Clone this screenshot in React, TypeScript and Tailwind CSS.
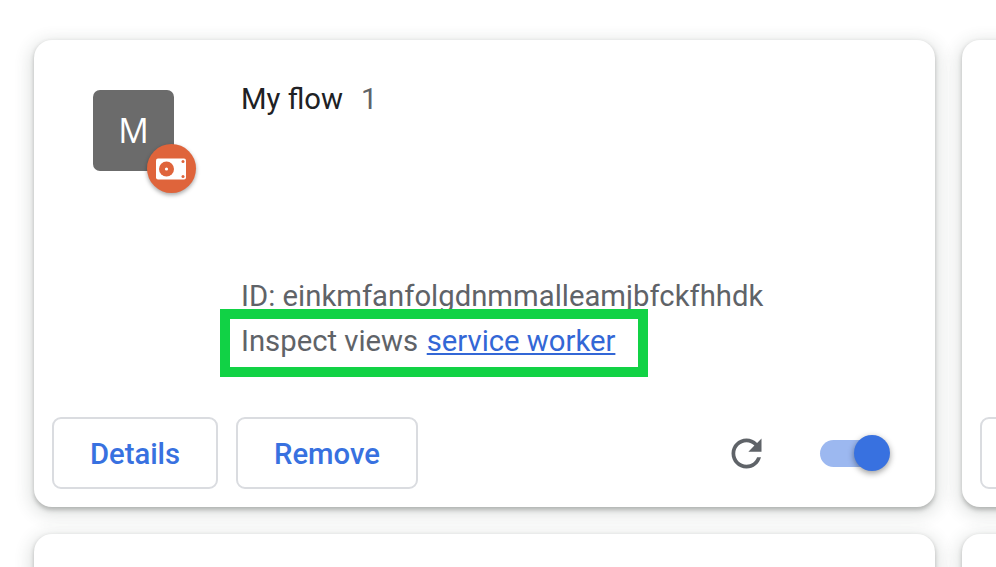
import type { ReactNode } from "react";

function Card({ children }: { children?: ReactNode }) {
  return (
    <section className="flex h-[467px] w-[901px] flex-col rounded-[18px] bg-white shadow-[0_2.25px_4.5px_rgba(60,64,60,0.3),0_4.5px_16px_4.5px_rgba(60,70,67,0.14)]">
      {children}
    </section>
  );
}

function ActionButton({ label, className }: { label?: string; className: string }) {
  return (
    <button
      className={`h-[72px] shrink-0 rounded-[9px] border-2 border-[#dadce0] pt-[3px] text-[29.25px] font-medium text-[#3871e0] ${className}`}
    >
      {label}
    </button>
  );
}

function UnpackedBadge() {
  return (
    <span className="absolute top-[54px] left-[54px] flex size-[49px] items-center justify-center rounded-full bg-[#df643b] shadow-[0_2px_4px_rgba(0,0,0,0.35)]">
      <svg className="-ml-px" width="30" height="22" viewBox="0 0 30 22">
        <rect x="0" y="0.5" width="30" height="21" rx="2" fill="#fff" />
        <circle cx="10.5" cy="11" r="7.5" fill="#df643b" />
        <circle cx="10.5" cy="11" r="1.6" fill="#fff" />
        <circle cx="27" cy="3.6" r="1.5" fill="#df643b" />
        <circle cx="27" cy="18.4" r="1.5" fill="#df643b" />
      </svg>
    </span>
  );
}

function ExtensionCard() {
  return (
    <Card>
      <div className="flex h-[359px] pt-[50px] pl-[59px]">
        <div className="relative flex size-[81px] shrink-0 items-center justify-center rounded-[7px] bg-[#6b6b6b] text-[34px] text-white">
          <span className="font-['Open_Sans',sans-serif] font-medium">M</span>
          <UnpackedBadge />
        </div>
        <div className="ml-[67px] text-[29.25px] leading-[45px] whitespace-nowrap text-[#5f6368]">
          <div className="-mt-[13px] flex h-[45px] gap-[18px]">
            <h2 className="text-[#202124]">My flow</h2>
            <span>1</span>
          </div>
          <div className="mt-[152px] tracking-[0.02px]">ID: einkmfanfolgdnmmalleamjbfckfhhdk</div>
          <div className="relative">
            Inspect views{" "}
            <a className="ml-[1.3px] text-[#3367d6] underline">service worker</a>
            <span className="absolute top-[-10px] left-[-21px] h-[68px] w-[428px] border-10 border-[#11d245]" />
          </div>
        </div>
      </div>
      <div className="mt-[18px] flex items-center pl-[18px]">
        <ActionButton label="Details" className="w-[166px]" />
        <ActionButton label="Remove" className="ml-[18px] w-[182px]" />
        <svg className="ml-[306px]" width="45" height="45" viewBox="0 0 24 24" fill="#5f6368">
          <path d="M17.65 6.35C16.2 4.9 14.21 4 12 4c-4.42 0-7.99 3.58-7.99 8s3.57 8 7.99 8c3.73 0 6.84-2.55 7.73-6h-2.08c-.82 2.33-3.04 4-5.65 4-3.31 0-6-2.69-6-6s2.69-6 6-6c1.66 0 3.14.69 4.22 1.78L13 11h7V4l-2.35 2.35z" />
        </svg>
        <div className="ml-[51px] flex h-[27px] w-[70.4px] items-center justify-end rounded-l-full bg-[linear-gradient(to_right,#9cb8f0_50px,transparent_50px)]">
          <span className="size-9 rounded-full bg-[#3871e0] shadow-[0_2.25px_6.75px_rgba(0,0,0,0.4)]" />
        </div>
      </div>
    </Card>
  );
}

export default function App() {
  return (
    <main className="h-[567px] w-[996px] overflow-hidden bg-white font-[Roboto,sans-serif]">
      <div className="grid w-[1829px] grid-cols-[901px_901px] gap-[27px] pt-10 pl-[34px]">
        <ExtensionCard />
        <Card>
          <div className="mt-[377px] flex pl-[18px]">
            <ActionButton className="w-[166px]" />
          </div>
        </Card>
        <Card />
        <Card />
      </div>
    </main>
  );
}
